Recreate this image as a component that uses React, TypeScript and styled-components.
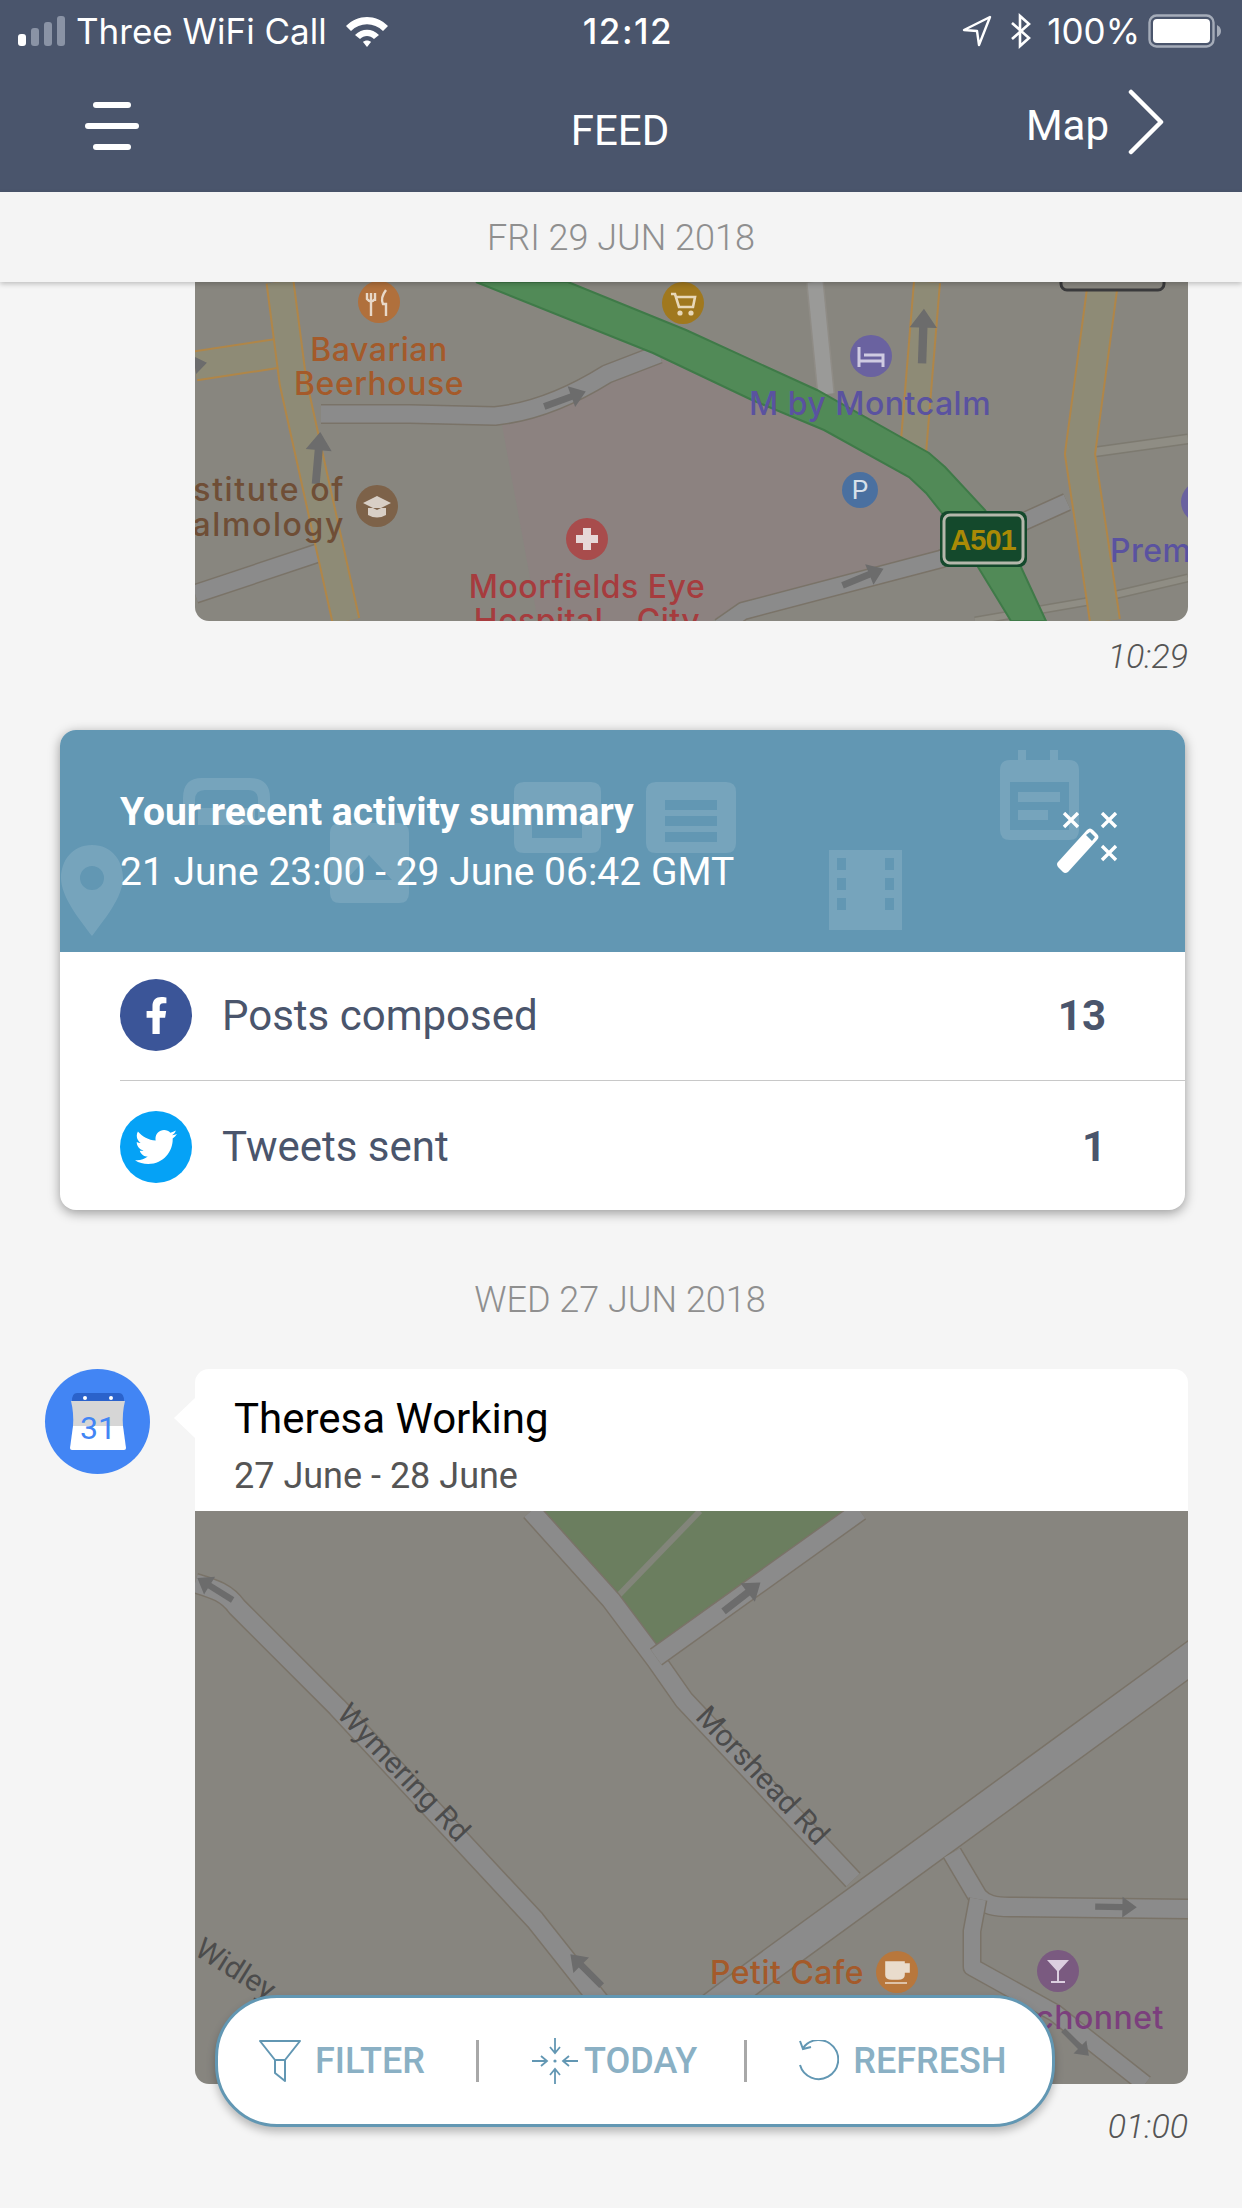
import React from "react";
import styled, { createGlobalStyle } from "styled-components";
import { FaFacebookF, FaTwitter } from "react-icons/fa";

const GlobalStyle = createGlobalStyle`
  html, body {
    margin: 0;
    padding: 0;
    background: #f5f5f5;
  }
  * {
    box-sizing: border-box;
  }
`;

const Road: React.FC<{ d: string; w: number; fill?: string; edge?: string; rim?: number }> = ({
  d,
  w,
  fill = "#8b8b8b",
  edge = "#7a7368",
  rim = 3,
}) => (
  <>
    <path d={d} fill="none" stroke={edge} strokeWidth={w + rim} strokeLinejoin="round" />
    <path d={d} fill="none" stroke={fill} strokeWidth={w} strokeLinejoin="round" />
  </>
);

const Arrow: React.FC<{ x: number; y: number; angle: number; size?: number }> = ({ x, y, angle, size = 1 }) => (
  <path
    transform={`translate(${x} ${y}) rotate(${angle}) scale(${size})`}
    d="M-26 -4 L8 -4 L8 -13 L26 0 L8 13 L8 4 L-26 4 Z"
    fill="#6c6c6c"
  />
);

const Pin: React.FC<{ x: number; y: number; r?: number; color: string; children?: React.ReactNode }> = ({
  x,
  y,
  r = 21,
  color,
  children,
}) => (
  <g transform={`translate(${x} ${y})`}>
    <circle r={r} fill={color} />
    {children}
  </g>
);

const YELLOW = "#8e8b76";
const ORANGE = "#b08648";

const MoorfieldsMap = () => (
  <MapSvg viewBox="0 0 993 339" $height={339} $rounded>
    <rect width="993" height="339" fill="#88867f" />
    <path d="M307 143 L458 72 L557 118 L629 148 L714 195 L747 231 L744 270 L543 321 L517 339 L343 339 Z" fill="#8c8280" />

    <Road d="M0 312 L126 270" w={17} />
    <Road d="M126 132 L215 132 L300 134 C340 130 380 112 412 92 L464 72" w={17} />
    <Road d="M525 345 L548 329 L746 277 L872 220" w={16} />
    <Road d="M620 0 L631 112" w={15} edge="#8f8c86" fill="#9a9a98" />
    <Road d="M885 172 L993 157" w={8} edge="#7d7a70" fill="#8f8d84" />
    <Road d="M780 339 L890 320 L993 296" w={6} edge="#7d7a70" fill="#8f8d84" />

    <Road d="M0 84 L85 71" w={27} fill={YELLOW} edge={ORANGE} rim={4} />
    <Road d="M85 0 L98 100 L151 339" w={25} fill={YELLOW} edge={ORANGE} rim={4} />
    <Road d="M732 0 L718 171" w={24} fill={YELLOW} edge={ORANGE} rim={4} />
    <Road d="M908 0 L885 172 L910 339" w={28} fill={YELLOW} edge={ORANGE} rim={4} />

    <path
      d="M281 0 L373 0 L491 48 L622 108 L734 171 L750 185 L790 228 L826 285 L851 339 L816 339 L783 285 L747 231 L731 211 L714 195 L629 148 L557 118 L458 71 Z"
      fill="#518a57"
      stroke="#3f7a48"
      strokeWidth="2"
    />

    <Arrow x={370} y={117} angle={-20} size={0.85} />
    <Arrow x={123} y={176} angle={-85} size={1} />
    <Arrow x={728} y={54} angle={-88} size={1.05} />
    <Arrow x={668} y={295} angle={-22} size={0.85} />
    <Arrow x={-6} y={84} angle={-10} size={0.7} />

    <rect x="866" y="-12" width="103" height="20" rx="6" fill="#88867f" stroke="#3a3a3c" strokeWidth="3" />

    <Pin x={184} y={20} color="#b0703c">
      <path d="M-8 -9 V-1 M-4 -9 V-1 M-12 -9 V-3 Q-8 2 -4 -3 V-9 M-8 0 V14 M7 -12 Q1 -4 4 2 H7 V14" fill="none" stroke="#e8d8c8" strokeWidth="2.4" />
    </Pin>
    <Pin x={488} y={21} color="#a0781e">
      <path d="M-12 -9 H-8 L-4 4 H10 L12 -6 H-7" fill="none" stroke="#e8d8b8" strokeWidth="2.6" />
      <circle cx="-3" cy="10" r="2.6" fill="#e8d8b8" />
      <circle cx="8" cy="10" r="2.6" fill="#e8d8b8" />
    </Pin>
    <Pin x={676} y={74} color="#6a62a0">
      <path d="M-12 -9 V11 M-12 5 H12 V11 M-7 -1 H12 V5" fill="none" stroke="#cfcbe2" strokeWidth="3" />
    </Pin>
    <Pin x={665} y={208} r={18} color="#4a70a0">
      <PinLetter textAnchor="middle" y={9}>P</PinLetter>
    </Pin>
    <Pin x={182} y={224} color="#7d6249">
      <path d="M-14 -3 L0 -10 L14 -3 L0 4 Z M-9 2 V9 Q0 14 9 9 V2" fill="#d8cfc6" />
    </Pin>
    <Pin x={392} y={257} color="#a84c4c">
      <path d="M-4 -11 H4 V-4 H11 V4 H4 V11 H-4 V4 H-11 V-4 H-4 Z" fill="#e6d8d8" />
    </Pin>
    <Pin x={1007} y={220} color="#6a62a0" />

    <g>
      <rect x="745" y="229" width="87" height="56" rx="8" fill="#14492c" />
      <rect x="749" y="233" width="79" height="48" rx="6" fill="none" stroke="#b5b8ac" strokeWidth="3" />
      <ShieldText x={788} y={268} textAnchor="middle">A501</ShieldText>
    </g>

    <MapLabel x={184} y={79} textAnchor="middle" $color="#a45a2a">Bavarian</MapLabel>
    <MapLabel x={184} y={113} textAnchor="middle" $color="#a45a2a">Beerhouse</MapLabel>
    <MapLabel x={675} y={133} textAnchor="middle" $color="#5a52a0">M by Montcalm</MapLabel>
    <MapLabel x={150} y={219} textAnchor="end" $color="#6f4e36" $tracking={1.6}>stitute of</MapLabel>
    <MapLabel x={150} y={254} textAnchor="end" $color="#6f4e36" $tracking={1.6}>almology</MapLabel>
    <MapLabel x={392} y={316} textAnchor="middle" $color="#a63c3e">Moorfields Eye</MapLabel>
    <MapLabel x={392} y={350} textAnchor="middle" $color="#a63c3e">Hospital - City</MapLabel>
    <MapLabel x={915} y={280} $color="#5a52a0">Prem</MapLabel>
  </MapSvg>
);

const MorsheadMap = () => (
  <MapSvg viewBox="0 0 993 573" $height={573} $rounded>
    <rect width="993" height="573" fill="#87857f" />
    <path d="M349 0 L649 0 L461 137 L422 86 Z" fill="#6b7e5f" />
    <path d="M505 0 L422 86" stroke="#82857a" strokeWidth="6" fill="none" />

    <Road d="M0 72 C20 78 32 82 42 96 L142 196 L340 409 L470 573" w={18} />
    <Road d="M336 0 L416 89 L461 149 L489 189 L658 369" w={18} />
    <Road d="M665 0 L461 146" w={18} />
    <Road d="M1010 137 L700 363 L560 465 L480 525" w={30} />
    <Road d="M757 342 L783 386 C790 394 800 396 815 396 L993 398" w={18} />
    <Road d="M783 388 L777 420 L777 456 L860 502 L950 573" w={16} />

    <Arrow x={547} y={86} angle={-38} size={0.9} />
    <Arrow x={20} y={78} angle={-148} size={0.8} />
    <Arrow x={391} y={459} angle={-135} size={0.85} />
    <Arrow x={921} y={396} angle={1} size={0.8} />
    <Arrow x={881} y={532} angle={45} size={0.7} />

    <RoadLabel transform="translate(207 263) rotate(46.5)" textAnchor="middle" dominantBaseline="middle">
      Wymering Rd
    </RoadLabel>
    <RoadLabel transform="translate(566 266) rotate(46.5)" textAnchor="middle" dominantBaseline="middle">
      Morshead Rd
    </RoadLabel>
    <RoadLabel transform="translate(-2 443) rotate(32)">Widley</RoadLabel>

    <MapLabel x={592} y={473} textAnchor="middle" $color="#a45a2a">Petit Cafe</MapLabel>
    <Pin x={702} y={461} color="#b8773c">
      <path d="M-11 -10 H7 V3 Q7 7 1 7 H-5 Q-11 7 -11 3 Z M7 -8 H12 V0 H7 M-12 11 H10" fill="#e9dccc" stroke="#e9dccc" strokeWidth="1.6" />
    </Pin>
    <Pin x={863} y={460} color="#7a5a80">
      <path d="M-11 -11 H11 L1 0 V10 H7 V12 H-7 V10 H-1 V0 Z" fill="#dccfe0" />
    </Pin>
    <MapLabel x={969} y={518} textAnchor="end" $color="#7b3f7d">chonnet</MapLabel>
  </MapSvg>
);

const WatermarkIcons = () => (
  <Watermark viewBox="0 0 1126 222">
    <g fill="#fff" fillOpacity="0.13">
      <path d="M32 115 C12 115 1 131 1 148 C1 167 20 190 32 206 C44 190 63 167 63 148 C63 131 52 115 32 115 Z M32 136 A12 12 0 1 1 32 160 A12 12 0 1 1 32 136 Z" fillRule="evenodd" />
      <path d="M142 48 H190 Q210 48 210 68 V90 H198 V70 Q198 60 188 60 H145 Q135 60 135 70 V95 H123 V68 Q123 48 142 48 Z" />
      <path d="M138 78 H195 V95 H138 Z" />
      <path fillRule="evenodd" d="M280 93 H339 Q349 93 349 103 V163 Q349 173 339 173 H280 Q270 173 270 163 V103 Q270 93 280 93 Z M286 150 L309 125 L332 150 Z" />
      <path fillRule="evenodd" d="M464 52 H531 Q541 52 541 62 V113 Q541 123 531 123 H464 Q454 123 454 113 V62 Q454 52 464 52 Z M472 80 V108 H522 V80 Z" />
      <path fillRule="evenodd" d="M596 52 H666 Q676 52 676 62 V113 Q676 123 666 123 H596 Q586 123 586 113 V62 Q586 52 596 52 Z M605 70 V80 H657 V70 Z M605 86 V96 H657 V86 Z M605 102 V112 H657 V102 Z" />
      <path fillRule="evenodd" d="M769 120 H842 V200 H769 Z M777 128 V140 H786 V128 Z M825 128 V140 H834 V128 Z M777 148 V160 H786 V148 Z M825 148 V160 H834 V148 Z M777 168 V180 H786 V168 Z M825 168 V180 H834 V168 Z" />
      <path fillRule="evenodd" d="M958 20 H966 V30 H990 V20 H998 V30 H1009 Q1019 30 1019 40 V100 Q1019 110 1009 110 H950 Q940 110 940 100 V40 Q940 30 950 30 H958 Z M950 52 V100 H1009 V52 Z M958 62 H1000 V72 H958 Z M958 80 H988 V90 H958 Z" />
    </g>
  </Watermark>
);

const App: React.FC = () => (
  <>
    <GlobalStyle />
    <Page>
      <TopBar>
        <StatusBar>
          <StatusLeft>
            <svg width="48" height="30" viewBox="0 0 48 30">
              <rect x="0" y="18" width="8" height="12" rx="3" fill="#fff" />
              <rect x="13" y="12" width="8" height="18" rx="3" fill="#8a93a5" />
              <rect x="26" y="6" width="8" height="24" rx="3" fill="#8a93a5" />
              <rect x="39" y="0" width="8" height="30" rx="3" fill="#8a93a5" />
            </svg>
            <span>Three WiFi Call</span>
            <svg width="44" height="31" viewBox="0 0 44 31">
              <path d="M1 10 C13 -2 31 -2 43 10 L38 15 C29 6 15 6 6 15 Z" fill="#fff" />
              <path d="M10 19 C17 12 27 12 34 19 L29 23 C25 19 19 19 15 23 Z" fill="#fff" />
              <path d="M18 26 C20 24 24 24 26 26 L22 31 Z" fill="#fff" />
            </svg>
          </StatusLeft>
          <Clock>12:12</Clock>
          <StatusRight>
            <svg width="30" height="32" viewBox="0 0 30 32">
              <path d="M28 2 L2 15 L15 16 L17 30 Z" fill="none" stroke="#fff" strokeWidth="2.4" strokeLinejoin="round" />
            </svg>
            <svg width="22" height="36" viewBox="0 0 22 36">
              <path d="M2 10 L19 25 L10 33 V3 L19 11 L2 26" fill="none" stroke="#fff" strokeWidth="2.6" />
            </svg>
            <span>100%</span>
            <svg width="74" height="34" viewBox="0 0 74 34">
              <rect x="1.5" y="1.5" width="64" height="31" rx="7" fill="none" stroke="#a5acb9" strokeWidth="2.4" />
              <rect x="5" y="5" width="57" height="24" rx="4" fill="#fff" />
              <path d="M69 11 Q73 13 73 17 Q73 21 69 23 Z" fill="#a5acb9" />
            </svg>
          </StatusRight>
        </StatusBar>
        <NavBar>
          <Burger>
            <BurgerLine $wide={false} />
            <BurgerLine $wide />
            <BurgerLine $wide={false} />
          </Burger>
          <NavTitle>FEED</NavTitle>
          <NavLink>
            <span>Map</span>
            <svg width="36" height="66" viewBox="0 0 36 66">
              <path d="M3 3 L33 33 L3 63" fill="none" stroke="#fff" strokeWidth="4.5" strokeLinecap="round" strokeLinejoin="round" />
            </svg>
          </NavLink>
        </NavBar>
      </TopBar>

      <StickyDate>FRI 29 JUN 2018</StickyDate>

      <Entry>
        <MoorfieldsMap />
        <Stamp>10:29</Stamp>
      </Entry>

      <SummaryCard>
        <SummaryHead>
          <WatermarkIcons />
          <SummaryTitle>Your recent activity summary</SummaryTitle>
          <SummaryRange>21 June 23:00 - 29 June 06:42 GMT</SummaryRange>
          <Wand viewBox="0 0 68 62">
            <path d="M2 50 L31 18 Q34 15 37 18 L41 22 Q44 25 41 28 L12 60 Q9 62 7 60 L2 55 Q0 52 2 50 Z M30 23 L36 29 L39 25 L34 20 Z" fill="#fff" fillRule="evenodd" />
            <path d="M8 1 L22 15 M22 1 L8 15 M46 1 L60 15 M60 1 L46 15 M46 34 L60 48 M60 34 L46 48" fill="none" stroke="#fff" strokeWidth="3.4" />
          </Wand>
        </SummaryHead>
        <SummaryRow $divided>
          <SocialBadge $color="#3b5598"><FaFacebookF size={37} /></SocialBadge>
          <RowLabel>Posts composed</RowLabel>
          <RowCount>13</RowCount>
        </SummaryRow>
        <SummaryRow>
          <SocialBadge $color="#05a2f6"><FaTwitter size={42} /></SocialBadge>
          <RowLabel>Tweets sent</RowLabel>
          <RowCount>1</RowCount>
        </SummaryRow>
      </SummaryCard>

      <DayLabel>WED 27 JUN 2018</DayLabel>

      <EventRow>
        <CalendarBadge>
          <svg width="58" height="58" viewBox="0 0 58 58">
            <path d="M3 8 Q3 0 8 0 H50 Q55 0 55 8 V10 H3 Z" fill="#2a62cb" />
            <circle cx="16" cy="5" r="2" fill="#fff" />
            <circle cx="42" cy="5" r="2" fill="#fff" />
            <path d="M2 8 H56 Q53 20 54 33 H4 Q5 20 2 8 Z" fill="#d6d6d6" />
            <path d="M4 33 H54 L57 55 Q57 57 55 57 H3 Q1 57 1 55 Z" fill="#fff" />
            <CalendarDate x="29" y="46" textAnchor="middle">31</CalendarDate>
          </svg>
        </CalendarBadge>
        <EventCard>
          <EventHead>
            <EventTitle>Theresa Working</EventTitle>
            <EventDates>27 June - 28 June</EventDates>
          </EventHead>
          <MorsheadMap />
        </EventCard>
      </EventRow>
      <Stamp $inset>01:00</Stamp>

      <ActionPill>
        <PillAction $gap={14}>
          <svg width="42" height="42" viewBox="0 0 42 42">
            <path d="M1 1 H41 L26 20 V41 L16 33 V20 Z M16 20 H26" fill="none" stroke="#6297b3" strokeWidth="2" strokeLinejoin="round" />
          </svg>
          FILTER
        </PillAction>
        <PillSeparator $before={51} $after={53} />
        <PillAction $gap={6}>
          <svg width="46" height="46" viewBox="0 0 46 46">
            <path d="M23 0 V14 M18 9 L23 15 L28 9 M23 46 V32 M18 37 L23 31 L28 37 M0 23 H14 M9 18 L15 23 L9 28 M46 23 H32 M37 18 L31 23 L37 28" fill="none" stroke="#6297b3" strokeWidth="1.8" />
            <circle cx="23" cy="23" r="1.6" fill="#6297b3" />
          </svg>
          TODAY
        </PillAction>
        <PillSeparator $before={47} $after={50} />
        <PillAction $gap={14}>
          <svg width="42" height="42" viewBox="0 0 42 42">
            <path d="M6 8 A19.5 19.5 0 1 1 3 25 M3 1 L6 9 L14 7" fill="none" stroke="#6297b3" strokeWidth="2" />
          </svg>
          REFRESH
        </PillAction>
      </ActionPill>
    </Page>
  </>
);

const Page = styled.div`
  position: relative;
  width: 1242px;
  height: 2208px;
  overflow: hidden;
  background: #f5f5f5;
  font-family: Roboto, "Liberation Sans", sans-serif;
`;

const TopBar = styled.header`
  height: 192px;
  background: #4a556c;
  color: #fff;
`;

const StatusBar = styled.div`
  display: grid;
  grid-template-columns: 1fr auto 1fr;
  align-items: center;
  height: 62px;
  padding: 0 20px 0 18px;
  font-family: Inter, Roboto, sans-serif;
  font-size: 35px;
`;

const StatusLeft = styled.div`
  display: flex;
  align-items: center;
  gap: 10px;

  svg:last-child {
    margin-left: 8px;
  }
`;

const Clock = styled.div`
  font-weight: 500;
  letter-spacing: 1.5px;
  margin-left: 16px;
`;

const StatusRight = styled.div`
  display: flex;
  align-items: center;
  justify-content: flex-end;
  gap: 15px;

  svg:first-child {
    margin-right: 3px;
  }

  span {
    margin-right: -7px;
  }
`;

const NavBar = styled.nav`
  position: relative;
  display: flex;
  align-items: center;
  justify-content: space-between;
  height: 130px;
  padding: 0 78px 6px 85px;
`;

const Burger = styled.div`
  display: flex;
  flex-direction: column;
  align-items: center;
  gap: 15px;
  width: 54px;
  margin-top: 4px;
`;

const BurgerLine = styled.span<{ $wide: boolean }>`
  display: block;
  width: ${(p) => (p.$wide ? 54 : 38)}px;
  height: 6px;
  border-radius: 3px;
  background: #fff;
`;

const NavTitle = styled.div`
  position: absolute;
  left: 0;
  right: 0;
  top: 45px;
  text-align: center;
  font-size: 42px;
  line-height: 48px;
  padding-right: 2px;
`;

const NavLink = styled.div`
  display: flex;
  align-items: center;
  gap: 19px;
  font-size: 42px;

  span {
    margin-top: 2px;
  }

  svg {
    margin-top: -4px;
  }
`;

const StickyDate = styled.div`
  position: relative;
  z-index: 2;
  height: 90px;
  padding-top: 26px;
  text-align: center;
  font-size: 36px;
  line-height: 40px;
  font-weight: 300;
  color: #8f8f8f;
  background: #f4f4f4;
  box-shadow: 0 2px 5px rgba(0, 0, 0, 0.22);
`;

const Entry = styled.section`
  margin: 0 54px 0 195px;
`;

const MapSvg = styled.svg<{ $height: number; $rounded?: boolean }>`
  display: block;
  width: 993px;
  height: ${(p) => p.$height}px;
  border-radius: ${(p) => (p.$rounded ? "0 0 14px 14px" : "0")};
`;

const MapLabel = styled.text<{ $color: string; $tracking?: number }>`
  font-family: Inter, Roboto, sans-serif;
  font-size: 32px;
  font-weight: 500;
  letter-spacing: ${(p) => p.$tracking ?? 0.5}px;
  fill: ${(p) => p.$color};
`;

const PinLetter = styled.text`
  font-family: Roboto, sans-serif;
  font-size: 26px;
  fill: #d8e0ea;
`;

const ShieldText = styled.text`
  font-family: "Liberation Sans", sans-serif;
  font-size: 29px;
  font-weight: 700;
  fill: #a98a06;
  letter-spacing: -1px;
`;

const RoadLabel = styled.text`
  font-family: Roboto, sans-serif;
  font-size: 30px;
  fill: #4c4c4c;
`;

const Stamp = styled.div<{ $inset?: boolean }>`
  margin: 0 ${(p) => (p.$inset ? "54px" : "0")} 0 0;
  padding-top: ${(p) => (p.$inset ? 23 : 16)}px;
  text-align: right;
  font-size: 34px;
  line-height: 38px;
  font-weight: 300;
  font-style: italic;
  color: #555;
`;

const SummaryCard = styled.section`
  width: 1125px;
  margin: 55px 0 0 60px;
  border-radius: 16px;
  overflow: hidden;
  background: #fff;
  box-shadow: 0 3px 12px rgba(0, 0, 0, 0.38);
`;

const SummaryHead = styled.div`
  position: relative;
  height: 222px;
  padding: 61px 0 0 60px;
  background: #6297b3;
  color: #fff;
`;

const Watermark = styled.svg`
  position: absolute;
  left: 0;
  top: 0;
  width: 1126px;
  height: 222px;
`;

const Wand = styled.svg`
  position: absolute;
  left: 996px;
  top: 82px;
  width: 68px;
  height: 62px;
`;

const SummaryTitle = styled.div`
  position: relative;
  font-size: 39px;
  line-height: 42px;
  font-weight: 700;
`;

const SummaryRange = styled.div`
  position: relative;
  margin-top: 18px;
  font-size: 39px;
  line-height: 42px;
`;

const SummaryRow = styled.div<{ $divided?: boolean }>`
  display: flex;
  align-items: center;
  height: 129px;
  margin-left: 60px;
  padding: ${(p) => (p.$divided ? "0 79px 2px 0" : "2px 79px 0 0")};
  border-bottom: ${(p) => (p.$divided ? "1px solid #c8c8c8" : "none")};
`;

const SocialBadge = styled.div<{ $color: string }>`
  display: flex;
  align-items: center;
  justify-content: center;
  flex: none;
  width: 72px;
  height: 72px;
  border-radius: 50%;
  background: ${(p) => p.$color};
  color: #fff;
`;

const RowLabel = styled.div`
  flex: 1;
  margin-left: 30px;
  font-size: 42px;
  color: #4a556c;
`;

const RowCount = styled.div`
  font-size: 42px;
  font-weight: 700;
  color: #4a556c;
`;

const DayLabel = styled.div`
  margin-top: 70px;
  padding-right: 2px;
  text-align: center;
  font-size: 36px;
  line-height: 40px;
  font-weight: 300;
  color: #8f8f8f;
`;

const EventRow = styled.section`
  display: flex;
  align-items: flex-start;
  margin: 49px 54px 0 45px;
`;

const CalendarBadge = styled.div`
  display: flex;
  align-items: center;
  justify-content: center;
  flex: none;
  width: 105px;
  height: 105px;
  border-radius: 50%;
  margin-right: 45px;
  background: #4285f4;
`;

const CalendarDate = styled.text`
  font-family: Roboto, sans-serif;
  font-size: 32px;
  fill: #4285f4;
`;

const EventCard = styled.div`
  position: relative;
  width: 993px;
  border-radius: 14px;
  background: #fff;

  &::before {
    content: "";
    position: absolute;
    left: -21px;
    top: 29px;
    border-style: solid;
    border-width: 20px 21px 20px 0;
    border-color: transparent #fff transparent transparent;
  }
`;

const EventHead = styled.div`
  height: 142px;
  padding: 26px 0 0 39px;
`;

const EventTitle = styled.div`
  font-size: 42px;
  line-height: 48px;
  color: #000;
`;

const EventDates = styled.div`
  margin-top: 13px;
  font-size: 36px;
  line-height: 40px;
  color: #555;
`;

const ActionPill = styled.div`
  position: absolute;
  left: 215px;
  top: 1995px;
  display: flex;
  align-items: center;
  width: 840px;
  height: 132px;
  padding-left: 41px;
  border: 3px solid #6297b3;
  border-radius: 62px;
  background: #fff;
  box-shadow: 0 5px 8px rgba(0, 0, 0, 0.25);
`;

const PillAction = styled.div<{ $gap: number }>`
  display: flex;
  align-items: center;
  gap: ${(p) => p.$gap}px;
  font-size: 36px;
  font-weight: 500;
  color: #8ab0c4;
`;

const PillSeparator = styled.span<{ $before: number; $after: number }>`
  width: 3px;
  height: 42px;
  margin: 0 ${(p) => p.$after}px 0 ${(p) => p.$before}px;
  background: #a8a8a8;
`;

export default App;
